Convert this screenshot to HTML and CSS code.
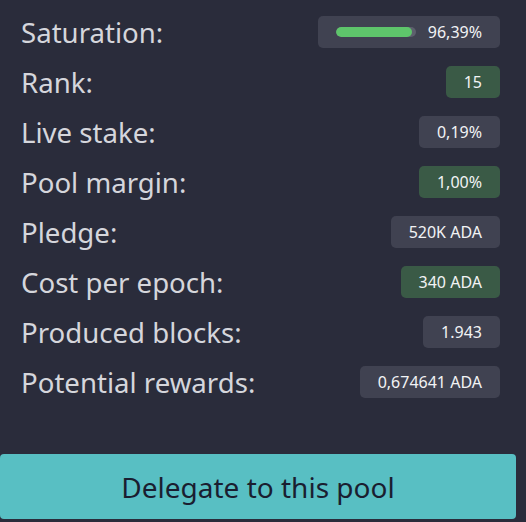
FILE: index.html
```html
<!DOCTYPE html>
<html>
<head>
<meta charset="utf-8">
<link rel="stylesheet" href="styles.css">
</head>
<body>
<div class="panel">
  <div class="stats">
    <div class="row">
      <span class="label">Saturation:</span>
      <span class="badge gray sat">
        <span class="track"><span class="fill" style="width:95%"></span></span>
        <span>96,39%</span>
      </span>
    </div>
    <div class="row"><span class="label">Rank:</span><span class="badge green">15</span></div>
    <div class="row"><span class="label">Live stake:</span><span class="badge gray">0,19%</span></div>
    <div class="row"><span class="label">Pool margin:</span><span class="badge green">1,00%</span></div>
    <div class="row"><span class="label">Pledge:</span><span class="badge gray">520K ADA</span></div>
    <div class="row"><span class="label">Cost per epoch:</span><span class="badge green">340 ADA</span></div>
    <div class="row"><span class="label">Produced blocks:</span><span class="badge gray">1.943</span></div>
    <div class="row"><span class="label">Potential rewards:</span><span class="badge gray">0,674641 ADA</span></div>
  </div>
  <button class="delegate">Delegate to this pool</button>
</div>
</body>
</html>
```
FILE: styles.css
```css
html, body {
  margin: 0;
  padding: 0;
  background: #2a2c3b;
}
body {
  font-family: "Noto Sans", "Open Sans", sans-serif;
  width: 526px;
  height: 522px;
  overflow: hidden;
}
.panel {
  display: flex;
  flex-direction: column;
}
.stats {
  display: flex;
  flex-direction: column;
  gap: 18px;
  padding: 16px 26px 0 21px;
}
.row {
  display: flex;
  justify-content: space-between;
  align-items: center;
  height: 32px;
}
.label {
  font-size: 27.6px;
  font-weight: 400;
  color: #d5d6dc;
  line-height: 32px;
}
.badge {
  height: 32px;
  box-sizing: border-box;
  padding: 0 18px;
  border-radius: 5px;
  font-size: 16px;
  font-weight: 400;
  color: #f2f3f5;
  display: flex;
  align-items: center;
}
.gray { background: #404251; }
.green { background: #3a5a46; }
.sat {
  width: 182px;
  gap: 12px;
}
.track {
  width: 80px;
  height: 10px;
  border-radius: 5px;
  background: #5d5f6d;
  display: block;
  overflow: hidden;
}
.fill {
  display: block;
  height: 100%;
  background: #5ec56b;
  border-radius: 5px;
}
.delegate {
  margin-top: 56px;
  width: 516px;
  height: 65px;
  border: none;
  border-radius: 4px;
  background: #58bfc3;
  color: #1a1e30;
  font-family: "Noto Sans", "Open Sans", sans-serif;
  font-size: 28px;
  padding: 0;
  text-align: center;
}
```
